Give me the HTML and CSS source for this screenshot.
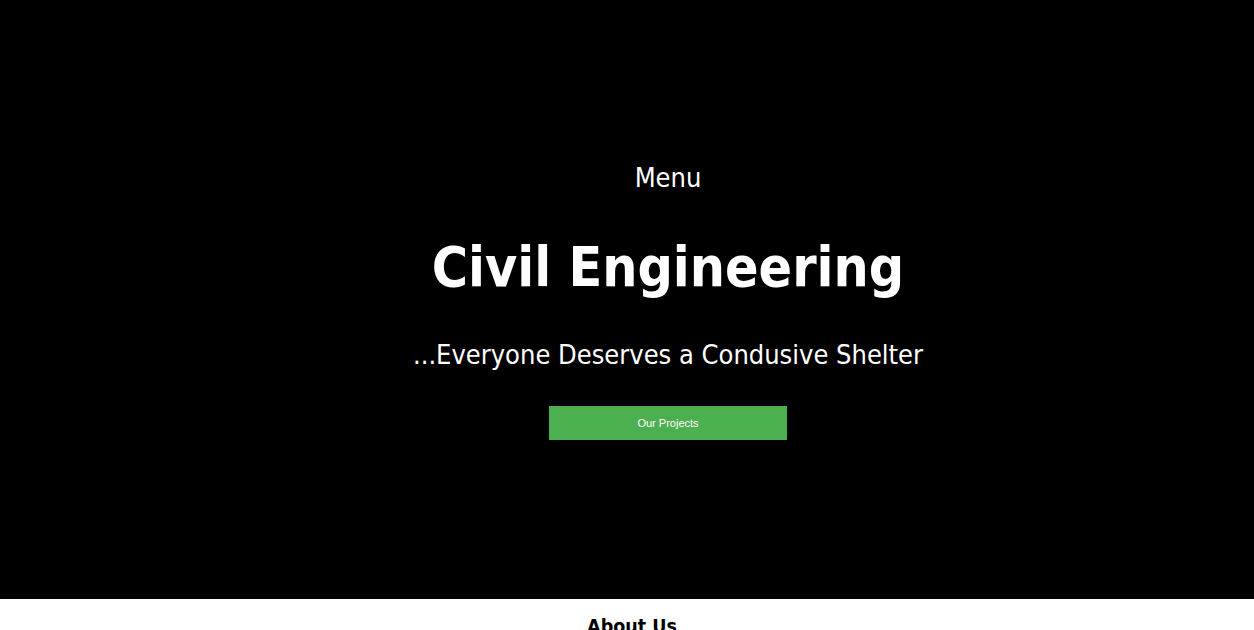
FILE: index.html
```html
<!DOCTYPE html>
<html>
<head>
<meta charset="utf-8">
<title>Civil Engineering</title>
<link rel="stylesheet" href="styles.css">
</head>
<body>
<header class="hero">
  <div class="hero-inner">
    <nav class="menu">Menu</nav>
    <h1 class="title">Civil Engineering</h1>
    <p class="tagline">...Everyone Deserves a Condusive Shelter</p>
    <a class="btn" href="#">Our Projects</a>
  </div>
</header>
<section class="about">
  <h2 class="about-title">About Us</h2>
</section>
</body>
</html>
```
FILE: styles.css
```css
html, body {
  margin: 0;
  padding: 0;
  background: #fff;
  font-family: "DejaVu Sans Condensed", "DejaVu Sans", sans-serif;
}
.hero {
  background: #000;
  height: 599px;
  color: #fff;
}
.hero-inner {
  display: flex;
  flex-direction: column;
  align-items: center;
  padding-left: 82px;
  padding-top: 164px;
}
.menu {
  font-size: 27px;
  line-height: 27px;
}
.title {
  margin: 49px 0 0;
  font-size: 55px;
  line-height: 55px;
  font-weight: bold;
}
.tagline {
  margin: 46px 0 0;
  font-size: 27px;
  line-height: 27px;
}
.btn {
  margin-top: 38px;
  display: flex;
  align-items: center;
  justify-content: center;
  width: 238px;
  height: 34px;
  background: #4caf50;
  color: #fff;
  text-decoration: none;
  font-family: "Liberation Sans", Arial, sans-serif;
  font-size: 11px;
}
.about {
  text-align: center;
  padding-left: 10px;
}
.about-title {
  margin: 0;
  padding-top: 16px;
  font-size: 19.5px;
  line-height: 24px;
  font-weight: bold;
}
```
